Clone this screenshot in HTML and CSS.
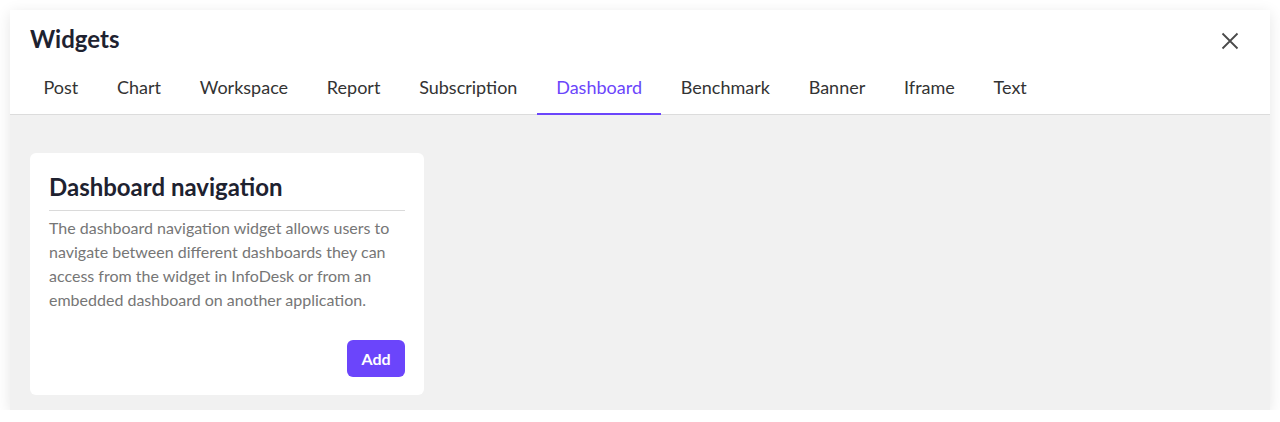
FILE: index.html
```html
<!DOCTYPE html>
<html lang="en">
<head>
<meta charset="utf-8">
<title>Widgets</title>
<link rel="stylesheet" href="styles.css">
</head>
<body>
<div class="modal">
  <div class="modal-head">
    <div class="title-row">
      <h1 class="title">Widgets</h1>
      <button class="close" aria-label="Close">
        <svg width="18" height="18" viewBox="0 0 18 18"><path d="M1.5 1.5 L16.5 16.5 M16.5 1.5 L1.5 16.5" stroke="#4a4a4a" stroke-width="1.8" fill="none"/></svg>
      </button>
    </div>
    <nav class="tabs">
      <span class="tab">Post</span>
      <span class="tab">Chart</span>
      <span class="tab">Workspace</span>
      <span class="tab">Report</span>
      <span class="tab">Subscription</span>
      <span class="tab active">Dashboard</span>
      <span class="tab">Benchmark</span>
      <span class="tab">Banner</span>
      <span class="tab">Iframe</span>
      <span class="tab">Text</span>
    </nav>
  </div>
  <div class="modal-body">
    <div class="card">
      <h2 class="card-title">Dashboard navigation</h2>
      <p class="card-text">The dashboard navigation widget allows users to navigate between different dashboards they can access from the widget in InfoDesk or from an embedded dashboard on another application.</p>
      <div class="card-actions">
        <button class="btn">Add</button>
      </div>
    </div>
  </div>
</div>
</body>
</html>
```
FILE: styles.css
```css
* { box-sizing: border-box; }
html, body { margin: 0; padding: 0; background: #fff; }
body {
  font-family: Lato, "Open Sans", sans-serif;
  color: #333;
}
.modal {
  margin: 10px 10px 0;
  height: 400px;
  background: #fff;
  box-shadow: 0 3px 14px rgba(0,0,0,0.1);
  display: flex;
  flex-direction: column;
}
.modal-head {
  padding: 0 20px 0 14px;
}
.title-row {
  display: flex;
  align-items: center;
  justify-content: space-between;
  padding: 8px 0 0 6px;
  height: 49px;
}
.title {
  margin: 0;
  font-size: 24px;
  line-height: 30px;
  font-weight: 700;
  color: #1e2230;
}
.close {
  border: 0;
  background: none;
  padding: 0;
  width: 18px;
  height: 18px;
  margin-right: 11px;
  margin-top: 4px;
  display: flex;
}
.tabs {
  display: flex;
  margin: 0 -20px 0 -14px;
  padding-left: 14px;
  border-bottom: 1px solid #dcdcdc;
}
.tab {
  padding: 16px 19.4px 14px;
  font-size: 18px;
  line-height: 24px;
  color: #333;
  border-bottom: 2px solid transparent;
  margin-bottom: -1px;
}
.tab.active {
  color: #6b45fb;
  border-bottom-color: #6b45fb;
}
.modal-body {
  flex: 1;
  background: #f1f1f1;
  padding: 38px 20px 0;
}
.card {
  width: 394px;
  background: #fff;
  border-radius: 6px;
  padding: 19px 19px 18px;
}
.card-title {
  margin: 0;
  font-size: 24px;
  line-height: 30px;
  font-weight: 700;
  color: #1e2230;
  padding-bottom: 8px;
  border-bottom: 1px solid #dadada;
}
.card-text {
  margin: 5px 0 0;
  font-size: 16px;
  line-height: 24px;
  color: #767676;
}
.card-actions {
  display: flex;
  justify-content: flex-end;
  margin-top: 28px;
}
.btn {
  font-family: inherit;
  border: 0;
  background: #6b45fb;
  color: #fff;
  font-size: 16px;
  font-weight: 700;
  height: 37px;
  width: 58px;
  border-radius: 6px;
  padding: 0;
}
```
